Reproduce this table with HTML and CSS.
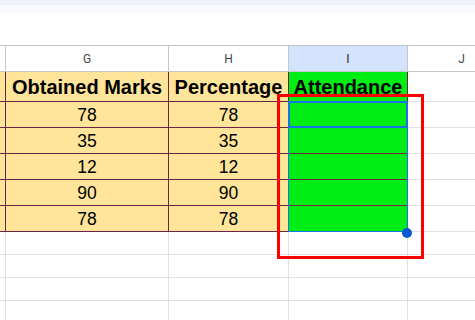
FILE: index.html
```html
<!DOCTYPE html>
<html>
<head>
<meta charset="utf-8">
<link rel="stylesheet" href="styles.css">
</head>
<body>
<div class="toolbar">
  <div class="band1"></div>
  <div class="band2"></div>
  <div class="formula"></div>
</div>
<div class="sheet-wrap">
  <div class="sheet">
    <div class="ch stub"></div>
    <div class="ch">G</div>
    <div class="ch">H</div>
    <div class="ch ch-sel">I</div>
    <div class="ch">J</div>

    <div class="c o"></div>
    <div class="c o hd">Obtained Marks</div>
    <div class="c o hd">Percentage</div>
    <div class="c g hd">Attendance</div>
    <div class="c e"></div>

    <div class="c o"></div><div class="c o num">78</div><div class="c o num">78</div><div class="c g"></div><div class="c e"></div>
    <div class="c o"></div><div class="c o num">35</div><div class="c o num">35</div><div class="c g"></div><div class="c e"></div>
    <div class="c o"></div><div class="c o num">12</div><div class="c o num">12</div><div class="c g"></div><div class="c e"></div>
    <div class="c o"></div><div class="c o num">90</div><div class="c o num">90</div><div class="c g"></div><div class="c e"></div>
    <div class="c o"></div><div class="c o num">78</div><div class="c o num">78</div><div class="c g"></div><div class="c e"></div>

    <div class="c e"></div><div class="c e"></div><div class="c e"></div><div class="c e"></div><div class="c e"></div>
    <div class="c e"></div><div class="c e"></div><div class="c e"></div><div class="c e"></div><div class="c e"></div>
    <div class="c e"></div><div class="c e"></div><div class="c e"></div><div class="c e"></div><div class="c e"></div>
    <div class="c e"></div><div class="c e"></div><div class="c e"></div><div class="c e"></div><div class="c e"></div>
  </div>
  <div class="range"></div>
  <div class="active"></div>
  <div class="handle"></div>
  <div class="annot"></div>
</div>
</body>
</html>
```

FILE: styles.css
```css
html, body {
  margin: 0;
  padding: 0;
  background: #ffffff;
  overflow: hidden;
  width: 475px;
  height: 320px;
}
.toolbar {
  display: flex;
  flex-direction: column;
}
.band1 { height: 5px; background: #edf1f8; }
.band2 { height: 8px; background: #f8fafd; }
.formula { height: 32px; background: #ffffff; }

.sheet-wrap {
  position: relative;
  width: 475px;
  height: 275px;
  overflow: hidden;
}
.sheet {
  display: grid;
  grid-template-columns: 6px 163px 120px 119px 108px;
  grid-template-rows: 27px 30px repeat(5, 26px) repeat(4, 23px);
  font-family: "Liberation Sans", Arial, sans-serif;
  color: #000;
}
.ch {
  box-sizing: border-box;
  border-top: 1px solid #c4c7c5;
  border-bottom: 1px solid #c4c7c5;
  border-right: 1px solid #c4c7c5;
  background: #ffffff;
  display: flex;
  align-items: center;
  justify-content: center;
  font-family: Roboto, "Liberation Sans", sans-serif;
  font-size: 12px;
  color: #444746;
  padding-top: 1px;
}
.ch-sel { background: #d3e3fd; color: #1f1f1f; }

.c {
  box-sizing: border-box;
  display: flex;
  align-items: flex-end;
  justify-content: center;
  white-space: nowrap;
}
.o {
  background: #ffe599;
  border-right: 1px solid #6e2346;
  border-bottom: 1px solid #6e2346;
}
.g {
  background: #00ee14;
  border-right: 1px solid #6e2346;
  border-bottom: 1px solid #6e2346;
}
.e {
  background: #ffffff;
  border-right: 1px solid #e1e1e1;
  border-bottom: 1px solid #e1e1e1;
}
.hd {
  font-weight: bold;
  font-size: 20px;
  line-height: 23px;
  padding-bottom: 2px;
}
.num {
  font-size: 17.5px;
  line-height: 20px;
  padding-bottom: 2px;
}

.range {
  position: absolute;
  left: 288px;
  top: 56px;
  width: 120px;
  height: 131px;
  box-sizing: border-box;
  border: 1px solid #1a73e8;
}
.active {
  position: absolute;
  left: 288px;
  top: 56px;
  width: 120px;
  height: 27px;
  box-sizing: border-box;
  border: 2px solid #1a73e8;
}
.handle {
  position: absolute;
  left: 402px;
  top: 183px;
  width: 10px;
  height: 10px;
  border-radius: 50%;
  background: #0b57d0;
}
.annot {
  position: absolute;
  left: 277px;
  top: 49px;
  width: 147px;
  height: 165px;
  box-sizing: border-box;
  border: 3px solid #ff0000;
}
```
